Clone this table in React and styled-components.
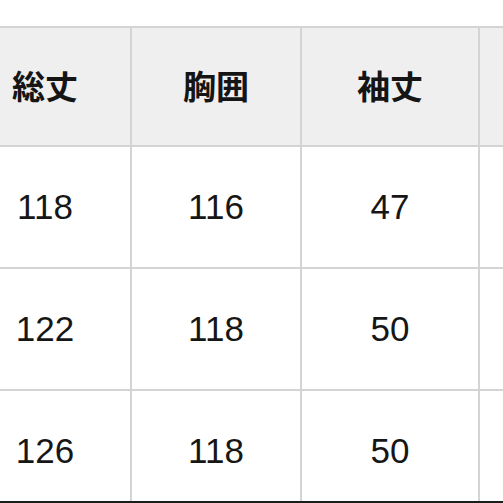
import React from 'react'
import styled, { createGlobalStyle } from 'styled-components'

const GlobalStyle = createGlobalStyle`
  html, body {
    margin: 0;
    padding: 0;
    background: #fff;
  }
  body {
    font-family: "Liberation Sans", "Noto Sans CJK JP", sans-serif;
    color: #141414;
  }
`

const headers = ['総丈', '胸囲', '袖丈', '']
const rows = [
  ['118', '116', '47', ''],
  ['122', '118', '50', ''],
  ['126', '118', '50', ''],
]

const App = () => {
  return (
    <>
      <GlobalStyle />
      <Frame>
        <Grid>
          {headers.map((h, i) => (
            <HeadCell key={'h' + i}>{h}</HeadCell>
          ))}
          {rows.map((r, ri) =>
            r.map((v, ci) => <Cell key={ri + '-' + ci}>{v}</Cell>)
          )}
        </Grid>
      </Frame>
    </>
  )
}

export default App

const Frame = styled.div`
  width: 503px;
  height: 503px;
  box-sizing: border-box;
  padding-top: 26px;
  overflow: hidden;
  border-bottom: 2px solid #1c1c1c;
`
const Grid = styled.div`
  display: grid;
  grid-template-columns: 170px 168px 176px 170px;
  grid-template-rows: 117px 120px 120px 120px;
  gap: 2px;
  padding-top: 2px;
  margin-left: -40px;
  width: max-content;
  background-color: #d4d4d4;
`
const HeadCell = styled.div`
  display: flex;
  align-items: center;
  justify-content: center;
  background-color: #efefef;
  font-family: "Noto Sans CJK JP", sans-serif;
  font-weight: 700;
  font-size: 33px;
  color: #151515;
  padding-bottom: 3px;
`
const Cell = styled.div`
  display: flex;
  align-items: center;
  justify-content: center;
  background-color: #fff;
  font-size: 35px;
  color: #161616;
`
